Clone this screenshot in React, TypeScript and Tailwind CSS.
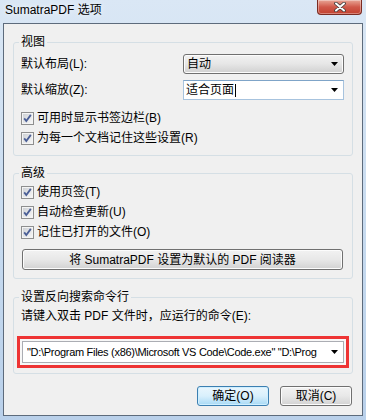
import type { ReactNode } from "react";

function Arrow() {
  return (
    <svg width="7" height="4" viewBox="0 0 7 4" className="shrink-0">
      <path d="M0 0h7L3.5 4z" fill="#000" />
    </svg>
  );
}

function CheckBox() {
  return (
    <svg width="13" height="13" viewBox="0 0 13 13" className="shrink-0">
      <defs>
        <linearGradient id="cbg" x1="0" y1="0" x2="1" y2="1">
          <stop offset="0" stopColor="#cfd2d6" />
          <stop offset="1" stopColor="#f6f6f6" />
        </linearGradient>
      </defs>
      <rect x="0.5" y="0.5" width="12" height="12" fill="#f4f4f4" stroke="#8e8f8f" />
      <rect x="2" y="2" width="9" height="9" fill="url(#cbg)" />
      <path d="M3.2 6.4 L5.3 9 L9.8 2.9" fill="none" stroke="#4b5f96" strokeWidth="1.8" />
    </svg>
  );
}

function CheckRow({ label, first }: { label: string; first?: boolean }) {
  return (
    <div className={`flex items-center gap-[3px] h-[16px] leading-[16px] ${first ? "" : "mt-[4px]"}`}>
      <CheckBox />
      <span>{label}</span>
    </div>
  );
}

function Group({ title, className, children }: { title: string; className: string; children: ReactNode }) {
  return (
    <fieldset className={`min-w-0 border border-[#d5dfe5] rounded-[3px] pl-[7px] pr-[8px] ${className}`}>
      <legend className="-ml-[2px] px-[2px] leading-[16px]">{title}</legend>
      {children}
    </fieldset>
  );
}

function CloseButton() {
  return (
    <div className="mr-[4px] w-[45px] h-[15px] rounded-b-[4px] border border-t-0 border-[#7a2b22] bg-gradient-to-b from-[#e7a596] via-[#d0584a] to-[#c2412f] flex items-center justify-center shadow-[inset_0_0_0_1px_rgba(255,255,255,0.35)]">
      <svg width="14" height="10" viewBox="0 0 14 10">
        <path d="M3 1.5 L11 8.5 M11 1.5 L3 8.5" stroke="#3b3b3b" strokeWidth="3.6" strokeLinecap="round" />
        <path d="M3 1.5 L11 8.5 M11 1.5 L3 8.5" stroke="#fff" strokeWidth="2" strokeLinecap="round" />
      </svg>
    </div>
  );
}

export default function App() {
  return (
    <div className="w-[366px] h-[420px] flex flex-col overflow-hidden bg-gradient-to-b from-[#dae7f5] via-[#c9dcf0] to-[#b9d0ea] font-['Liberation_Sans','Noto_Sans_CJK_SC',sans-serif] text-[12px] text-black">
      <div className="h-[23px] shrink-0 flex items-start justify-between">
        <span className="pl-[5px] pt-[2px] leading-[16px] [text-shadow:0_0_6px_#fff]">SumatraPDF 选项</span>
        <CloseButton />
      </div>

      <div className="mx-[3px] mb-[4px] flex-1 min-w-0 flex flex-col border border-[#5d6b7c] bg-[#f0f0f0] px-[9px] pt-[10px]">
        <Group title="视图" className="pt-[4px] pb-[9px]">
          <div className="flex items-center justify-between h-[20px]">
            <span className="leading-[16px]">默认布局(L):</span>
            <div className="w-[161px] h-[20px] flex items-center justify-between pl-[3px] pr-[5px] border border-[#707070] rounded-[3px] bg-gradient-to-b from-[#f2f2f2] via-[#e6e6e6] to-[#d0d0d0] shadow-[inset_0_0_0_1px_#fcfcfc]">
              <span className="leading-[16px]">自动</span>
              <Arrow />
            </div>
          </div>
          <div className="flex items-center justify-between h-[20px] mt-[6px]">
            <span className="leading-[16px]">默认缩放(Z):</span>
            <div className="w-[161px] h-[20px] flex items-center justify-between pl-[2px] pr-[5px] border border-[#a7c3de] border-t-[#7fa4c8] bg-white">
              <span className="flex items-center leading-[16px]">
                适合页面
                <span className="inline-block w-px h-[13px] bg-black ml-[1px]" />
              </span>
              <Arrow />
            </div>
          </div>
          <div className="mt-[10px]">
            <CheckRow label="可用时显示书签边栏(B)" first />
            <CheckRow label="为每一个文档记住这些设置(R)" />
          </div>
        </Group>

        <Group title="高级" className="mt-[9px] pt-[3px] pb-[8px]">
          <CheckRow label="使用页签(T)" first />
          <CheckRow label="自动检查更新(U)" />
          <CheckRow label="记住已打开的文件(O)" />
          <div className="mt-[9px] mx-[1px] h-[21px] flex items-center justify-center border border-[#707070] rounded-[3px] bg-gradient-to-b from-[#f2f2f2] via-[#e8e8e8] to-[#d2d2d2] shadow-[inset_0_0_0_1px_#fcfcfc] leading-[16px]">
            将 SumatraPDF 设置为默认的 PDF 阅读器
          </div>
        </Group>

        <Group title="设置反向搜索命令行" className="mt-[10px] pt-[3px] pb-[5px]">
          <div className="h-[16px] leading-[16px]">请键入双击 PDF 文件时，应运行的命令(E):</div>
          <div className="mt-[12px] -ml-[4px] -mr-[5px] border-[3px] border-[#ee3434] p-[2px] bg-[#f7f7f7]">
            <div className="h-[22px] flex items-center justify-between pl-[4px] pr-[5px] border border-[#abadb3] bg-white">
              <span className="min-w-0 overflow-hidden whitespace-nowrap flex-1 text-[11px] tracking-[-0.3px] leading-[16px]">
                "D:\Program Files (x86)\Microsoft VS Code\Code.exe" "D:\Prog
              </span>
              <span className="pl-[8px] flex items-center">
                <Arrow />
              </span>
            </div>
          </div>
        </Group>

        <div className="mt-[12px] pr-[1px] flex justify-end gap-[11px]">
          <div className="w-[72px] h-[20px] flex items-center justify-center border border-[#3c7fb1] rounded-[3px] bg-gradient-to-b from-[#eaf6fd] via-[#d9f0fc] to-[#a7d9f5] shadow-[inset_0_0_0_1px_#cfefff] leading-[16px]">
            确定(O)
          </div>
          <div className="w-[72px] h-[20px] flex items-center justify-center border border-[#707070] rounded-[3px] bg-gradient-to-b from-[#f2f2f2] via-[#e8e8e8] to-[#d2d2d2] shadow-[inset_0_0_0_1px_#fcfcfc] leading-[16px]">
            取消(C)
          </div>
        </div>
      </div>
    </div>
  );
}
